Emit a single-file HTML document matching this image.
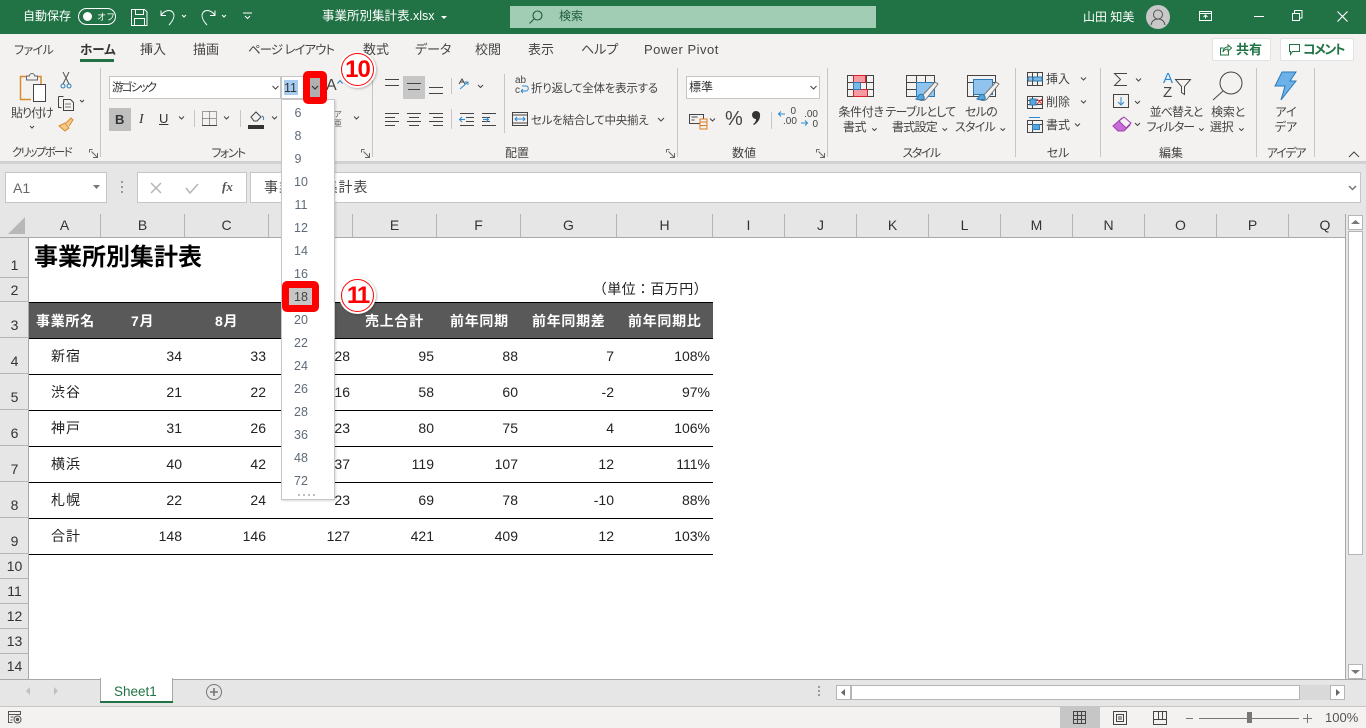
<!DOCTYPE html>
<html lang="ja"><head><meta charset="utf-8"><title>事業所別集計表.xlsx</title>
<style>
html,body{margin:0;padding:0}
body{width:1366px;height:728px;overflow:hidden;position:relative;background:#fff;font-family:"Liberation Sans","Noto Sans CJK JP",sans-serif;color:#444}
.t{position:absolute;white-space:nowrap;line-height:16px;font-size:12px}
.p{font-feature-settings:"palt"}
.tab{font-size:13px;top:42px}
.b{position:absolute;box-sizing:border-box}
svg{position:absolute;overflow:visible}
.w{color:#fff}
.c{text-align:center;transform:translateX(-50%)}
.col{position:absolute;top:214px;height:23px;line-height:23px;text-align:center;font-size:14px;color:#333;border-right:1px solid #b5b5b5;box-sizing:border-box}
.row{position:absolute;left:0;width:29px;box-sizing:border-box;border-bottom:1px solid #b5b5b5;text-align:center;font-size:14px;color:#333;display:flex;align-items:flex-end;justify-content:center;padding-bottom:3px;line-height:18px}
.d{position:absolute;font-size:14px;color:#222;line-height:18px;text-align:right;white-space:nowrap}
.h{position:absolute;top:312px;font-size:14px;font-weight:bold;color:#fff;line-height:18px;white-space:nowrap;letter-spacing:.7px}
.l{position:absolute;left:51px;font-size:14px;color:#222;line-height:18px;letter-spacing:1px}
.hl{position:absolute;left:29px;width:684px;height:1px;background:#000}
.m{position:absolute;left:294px;width:16px;text-align:center;font-size:12.5px;color:#5f6b78;line-height:16px}
.sep{position:absolute;top:68px;height:89px;width:1px;background:#c6c6c6}
</style></head><body>
<!-- title bar -->
<div class="b" style="left:0;top:0;width:1366px;height:34px;background:#217346"></div>
<div class="t w" style="left:23px;top:8px;font-size:12px">自動保存</div>
<div class="b" style="left:78px;top:8px;width:38px;height:17px;border:1px solid #fff;border-radius:9px"></div>
<div class="b" style="left:83px;top:12px;width:9px;height:9px;background:#fff;border-radius:50%"></div>
<div class="t w" style="left:97px;top:9px;font-size:9px">オフ</div>
<svg style="left:0;top:0" width="300" height="34" fill="none" stroke="#fff" stroke-width="1">
<path d="M131.500 9.500h13l2.500 2.500v13.500h-15.500zM135.500 9.500v5h8v-5M134.500 25.500v-7h10v7"/>
<path d="M161 10.500v5h5M161.500 15c2-4 8-6 11-3s1 8-3.500 13"/>
<path d="M182 15l2 2 2-2M222 15l2 2 2-2M245 16l2.500 2.500 2.500-2.500M243 13h9"/>
<path d="M215 10.500v5h-5M214.500 15c-2-4-8-6-11-3s-1 8 3.500 13"/>
</svg>
<div class="t w" style="left:322px;top:8px;font-size:12.500px">事業所別集計表.xlsx</div>
<svg style="left:440px;top:14px" width="8" height="6"><path d="M1 2h6l-3 3z" fill="#fff"/></svg>
<div class="b" style="left:510px;top:6px;width:366px;height:22px;background:#a0cdb3"></div>
<svg style="left:528px;top:9px" width="18" height="16" fill="none" stroke="#1f5c3c" stroke-width="1.100"><circle cx="9.500" cy="6.500" r="4.500"/><path d="M6 10l-4.500 4.500"/></svg>
<div class="t" style="left:559px;top:8px;color:#1f5c3c;font-size:12px">検索</div>
<div class="t w" style="left:1083px;top:9px;font-size:12px">山田 知美</div>
<div class="b" style="left:1146px;top:5px;width:24px;height:24px;background:#c8c8c8;border-radius:50%"></div>
<svg style="left:1146px;top:5px" width="24" height="24" fill="none" stroke="#555" stroke-width="1"><circle cx="12" cy="9.500" r="4.500"/><path d="M5 20c1-5 4-6 7-6s6 1 7 6"/></svg>
<svg style="left:1190px;top:0" width="176" height="34" fill="none" stroke="#fff" stroke-width="1">
<path d="M9.500 11.500h12v9h-12zM9.500 13.500h12M15.500 18.500v-3M13.500 17l2-2 2 2"/>
<path d="M64 16.500h10"/>
<path d="M102.500 13.500h7v7h-7zM104.500 13v-2.500h7.500v7.500h-2.500"/>
<path d="M147.500 11.500l10 10M157.500 11.500l-10 10" stroke-width="1.200"/>
</svg>
<!-- ribbon -->
<div class="b" style="left:0;top:34px;width:1366px;height:127px;background:#f3f2f1"></div>
<div class="b" style="left:0;top:161px;width:1366px;height:53px;background:#e6e6e6"></div>
<div class="b" style="left:0;top:161px;width:1366px;height:3px;background:#d2d2d2"></div>
<div class="t tab p" style="left:14px;font-size:12px;letter-spacing:-.6px">ファイル</div>
<div class="t tab p" style="left:80px;font-size:12.500px;font-weight:bold;color:#333">ホーム</div>
<div class="b" style="left:80px;top:59px;width:34px;height:3px;background:#217346"></div>
<div class="t tab" style="left:140px">挿入</div>
<div class="t tab" style="left:193px">描画</div>
<div class="t tab p" style="left:248px;font-size:12.500px;letter-spacing:-1px">ページ レイアウト</div>
<div class="t tab" style="left:363px">数式</div>
<div class="t tab p" style="left:415px">データ</div>
<div class="t tab" style="left:475px">校閲</div>
<div class="t tab" style="left:528px">表示</div>
<div class="t tab p" style="left:581px">ヘルプ</div>
<div class="t tab" style="left:644px;font-size:13px;letter-spacing:.5px">Power Pivot</div>
<div class="b" style="left:1212px;top:38px;width:59px;height:23px;background:#fff;border:1px solid #e2e2e2;border-radius:2px"></div>
<div class="b" style="left:1280px;top:38px;width:74px;height:23px;background:#fff;border:1px solid #e2e2e2;border-radius:2px"></div>
<svg style="left:1218px;top:43px" width="16" height="14" fill="none" stroke="#217346"><path d="M10.500 7.500v4.500h-8v-7h3M5 9c0-3 2-5 5-5V2l3.500 3L10 8V6c-2 0-4 1-5 3z"/></svg>
<div class="t" style="left:1236px;top:42px;font-weight:bold;color:#217346;font-size:13px">共有</div>
<svg style="left:1288px;top:43px" width="14" height="14" fill="none" stroke="#217346"><path d="M1.500 1.500h10v7h-7l-2 3v-3h-1z"/></svg>
<div class="t p" style="left:1303px;top:42px;font-weight:bold;color:#217346;font-size:13px;letter-spacing:-1.500px">コメント</div>
<!-- separators -->
<div class="sep" style="left:100px"></div><div class="sep" style="left:372px"></div><div class="sep" style="left:677px"></div><div class="sep" style="left:827px"></div><div class="sep" style="left:1015px"></div><div class="sep" style="left:1100px"></div><div class="sep" style="left:1256px"></div><div class="sep" style="left:1314px"></div>
<div class="b" style="left:504px;top:74px;width:1px;height:59px;background:#c6c6c6"></div>
<div class="b" style="left:451px;top:78px;width:1px;height:16px;background:#c6c6c6"></div>
<div class="b" style="left:451px;top:109px;width:1px;height:20px;background:#c6c6c6"></div>
<!-- clipboard -->
<svg style="left:0;top:60px" width="100" height="100" fill="none">
<path d="M31 39.500H20.500V16.500H41V24" stroke="#d98a2b" stroke-width="1.500"/><path d="M26.500 20v-4h3a2.500 2.500 0 0 1 5 0h3v4z" stroke="#666" fill="#f3f2f1"/>
<path d="M33.500 24.500h12v17h-12z" stroke="#444" fill="#fff"/>
<path d="M63 12l6 12M69 12l-6 12" stroke="#555"/><circle cx="63" cy="26" r="2" stroke="#2a7ab8"/><circle cx="69" cy="26" r="2" stroke="#2a7ab8"/>
<path d="M58.500 36.500h5M58.500 36.500v11h3M63.500 39.500h7l3 3v8h-10z" stroke="#444" fill="#f3f2f1"/><path d="M65 44h6M65 47h6" stroke="#777"/>
<path d="M80 40l2 2 2-2" stroke="#444"/><path d="M30 66l2 2 2-2" stroke="#444"/>
<path d="M59 66l6-3 4 5-4 3zM66 63l5-5 2 2-4 6" stroke="#d98a2b" fill="#f5c98a"/>
</svg>
<div class="t p" style="left:11px;top:105px;letter-spacing:-1px">貼り付け</div>
<div class="t p" style="left:12px;top:145px;font-size:11.500px;letter-spacing:-1.700px">クリップボード</div>
<svg style="left:89px;top:149px" width="10" height="10" fill="none" stroke="#666"><path d="M.500.500h3M.500.500v3M8.500 8.500L2.500 2.500M8.500 4v4.500H4"/></svg>
<!-- font group -->
<div class="b" style="left:109px;top:76px;width:172px;height:23px;background:#fff;border:1px solid #c6c6c6"></div>
<div class="t p" style="left:112px;top:80px;font-size:11.500px;color:#333;letter-spacing:-1.800px">游ゴシック</div>
<svg style="left:272px;top:85px" width="8" height="6" fill="none" stroke="#444"><path d="M.500 1l3 3 3-3"/></svg>
<div class="b" style="left:281px;top:76px;width:45px;height:23px;background:#fff;border:1px solid #c6c6c6"></div>
<div class="b" style="left:284px;top:80px;width:14px;height:15px;background:#a6cdf0"></div>
<div class="t" style="left:284px;top:80px;color:#333;font-size:12.500px">11</div>
<div class="t" style="left:326px;top:78px;font-size:16px;color:#444">A</div>
<svg style="left:337px;top:80px" width="6" height="5" fill="none" stroke="#2a7ab8"><path d="M.500 3.500l2.500-3 2.500 3"/></svg>
<div class="b" style="left:109px;top:108px;width:22px;height:23px;background:#bfbfbf"></div>
<div class="t" style="left:115px;top:112px;font-weight:bold;font-size:13px;color:#333">B</div>
<div class="t" style="left:139px;top:112px;font-style:italic;font-family:'Liberation Serif',serif;font-size:14px;color:#333">I</div>
<div class="t" style="left:159px;top:111px;font-size:13px;color:#333;text-decoration:underline">U</div>
<svg style="left:100px;top:108px" width="280" height="26" fill="none" stroke="#444">
<path d="M79 8.500l2.500 2.500 2.500-2.500M124 8.500l2.500 2.500 2.500-2.500M172 8.500l2.500 2.500 2.500-2.500M254 8.500l2.500 2.500 2.500-2.500"/>
<path d="M102.500 3.500h14v14h-14zM109.500 3.500v14M102.500 10.500h14" stroke-dasharray="1 1"/><path d="M102 17.500h15"/>
<path d="M94.500 2v17M140.500 2v17" stroke="#c6c6c6"/>
<path d="M151 9l5-5 5 5-4 4h-3z"/><path d="M162 8c2 1 2 3 1 4" stroke="#2a7ab8"/>
</svg>
<div class="b" style="left:248px;top:125px;width:16px;height:4px;background:#333"></div>
<div class="t" style="left:334px;top:110px;font-size:8px;line-height:9px;color:#666">ア<br>亜</div>
<div class="t c p" style="left:228px;top:145px;letter-spacing:-1.500px">フォント</div>
<svg style="left:361px;top:149px" width="10" height="10" fill="none" stroke="#666"><path d="M.500.500h3M.500.500v3M8.500 8.500L2.500 2.500M8.500 4v4.500H4"/></svg>
<!-- alignment -->
<div class="b" style="left:403px;top:76px;width:22px;height:23px;background:#c6c6c6"></div>
<svg style="left:380px;top:74px" width="125" height="60" fill="none" stroke="#444">
<path d="M5 5.500h14M5 11.500h14M27 9.500h14M28 15.500h12M49 13.500h14M49 19.500h14"/>
<path d="M5 39.500h14M5 43.500h10M5 47.500h14M5 51.500h10M27 39.500h14M29 43.500h10M27 47.500h14M29 51.500h10M49 39.500h14M53 43.500h10M49 47.500h14M53 51.500h10"/>
<path d="M80 15l8-7M85 8h3v3" stroke="#2a8ad4"/><path d="M79 10l3-5 3 5M80 8h4" stroke="#444"/><path d="M98 11l2.500 2.500 2.500-2.500"/>
<path d="M80 39.500h14M86 43.500h8M86 47.500h8M80 51.500h14M102 39.500h14M102 43.500h8M102 47.500h8M102 51.500h14"/>
<path d="M85 45.500h-5M82 43l-2.500 2.500L82 48M103 45.500h5M106 43l2.500 2.500L106 48" stroke="#2a8ad4"/>
</svg>
<div class="t" style="left:515px;top:76px;font-size:10px;line-height:10px;color:#444">ab<br>c</div>
<svg style="left:512px;top:76px" width="18" height="60" fill="none"><path d="M9 15h5c3 0 3-5 0-5h-4M9 15l2-2M9 15l2 2" stroke="#2a8ad4"/><path d="M.500 36.500h15v13H.500zM.500 39h15M.500 47h15" stroke="#444"/><path d="M3 43h10M5 41l-2 2 2 2M11 41l2 2-2 2" stroke="#2a8ad4"/></svg>
<div class="t p" style="left:531px;top:81px;font-size:11.500px;letter-spacing:-.25px">折り返して全体を表示する</div>
<div class="t p" style="left:531px;top:113px;font-size:11.500px;letter-spacing:-.25px">セルを結合して中央揃え</div>
<svg style="left:657px;top:117px" width="9" height="6" fill="none" stroke="#444"><path d="M1 1l3 3 3-3"/></svg>
<div class="t c" style="left:517px;top:145px">配置</div>
<svg style="left:666px;top:149px" width="10" height="10" fill="none" stroke="#666"><path d="M.500.500h3M.500.500v3M8.500 8.500L2.500 2.500M8.500 4v4.500H4"/></svg>
<!-- number -->
<div class="b" style="left:686px;top:76px;width:134px;height:23px;background:#fff;border:1px solid #c6c6c6"></div>
<div class="t" style="left:689px;top:79px;font-size:12px;color:#333">標準</div>
<svg style="left:810px;top:85px" width="8" height="6" fill="none" stroke="#444"><path d="M.500 1l3 3 3-3"/></svg>
<svg style="left:688px;top:110px" width="132" height="22" fill="none" stroke="#444">
<path d="M1.500 4.500h14v9h-14zM3.500 7h6M3.500 10h3"/><path d="M12 9h7v10h-7zM12 12h7M12 15.500h7" stroke="#e07b1c" fill="#f3f2f1"/>
<path d="M22 8.500l2.500 2.500L27 8.500"/><path d="M83.500 2v17" stroke="#c6c6c6"/>
<path d="M97 4h-6M93 1.500L90.500 4 93 6.500M113 13h6M117 10.500l2.500 2.500-2.500 2.500" stroke="#2a8ad4"/>
</svg>
<div class="t" style="left:725px;top:108px;font-size:20px;line-height:22px;color:#444">%</div>
<svg style="left:750px;top:110px" width="12" height="17"><path d="M6 1a4 4 0 0 1 4 5c0 4-3 7-6 9l-1-1c2-1 3-3 3-5a4 4 0 0 1 0-8z" fill="#333"/></svg>
<div class="t" style="left:783px;top:107px;font-size:10px;line-height:10px;color:#444;text-align:right;width:13px">0<br>.00</div>
<div class="t" style="left:802px;top:110px;font-size:10px;line-height:10px;color:#444;text-align:right;width:16px">.00<br>0</div>
<div class="t c" style="left:744px;top:145px">数値</div>
<svg style="left:816px;top:149px" width="10" height="10" fill="none" stroke="#666"><path d="M.500.500h3M.500.500v3M8.500 8.500L2.500 2.500M8.500 4v4.500H4"/></svg>
<!-- styles -->
<svg style="left:845px;top:72px" width="165" height="28" fill="none" stroke="#444">
<path d="M2.500 3.500h26v21h-26zM2.500 10.500h26M2.500 17.500h26M8.500 3.500v21M15.500 3.500v21M21.500 3.500v21"/>
<path d="M8.500 3.500h12v7h-12zM8.500 17.500h14v7h-14z" fill="#f59aa0" stroke="#d8222a"/><path d="M8.500 10.500h7v7h-7z" fill="#7ab8e8" stroke="#2a7ab8"/>
<path d="M61.500 3.500h28v21h-28zM61.500 10.500h28M61.500 17.500h28M71.500 3.500v21M80.500 3.500v21"/><path d="M71.500 10.500h18v14h-18z" fill="#90c4ee" stroke="#2a7ab8"/>
<path d="M76 25l14-15 3 2-12 15c-2 2-6 2-7 0z" fill="#f3f2f1" stroke="#777"/><path d="M74 23c3-2 6 1 5 4-2 1-6 1-8 0 2-1 2-3 3-4z" fill="#58a5dc" stroke="#2a7ab8"/>
<path d="M122.500 3.500h28v21h-28zM122.500 10.500h28M128.500 10.500v14"/><path d="M128.500 7.500h19v15h-19z" fill="#90c4ee" stroke="#2a7ab8"/>
<path d="M137 25l14-15 3 2-12 15c-2 2-6 2-7 0z" fill="#f3f2f1" stroke="#777"/><path d="M135 23c3-2 6 1 5 4-2 1-6 1-8 0 2-1 2-3 3-4z" fill="#58a5dc" stroke="#2a7ab8"/>
</svg>
<div class="t c p" style="left:861px;top:105px;line-height:15px;text-align:center;letter-spacing:-.3px">条件付き<br>書式 ⌄</div>
<div class="t c p" style="left:920.500px;top:105px;line-height:15px;text-align:center;letter-spacing:-.7px">テーブルとして<br>書式設定 ⌄</div>
<div class="t c p" style="left:981px;top:105px;line-height:15px;text-align:center;letter-spacing:-.7px">セルの<br>スタイル ⌄</div>
<div class="t c p" style="left:921px;top:145px;letter-spacing:-1.500px">スタイル</div>
<!-- cells -->
<svg style="left:1026px;top:70px" width="22" height="64" fill="none" stroke="#444">
<path d="M1.500 2.500h15v13h-15zM1.500 7h15M1.500 11h15M6.500 2.500v13M11.500 2.500v13"/><path d="M7 7h9v4H7z" fill="#7ab8e8" stroke="#2a7ab8"/><path d="M8 9H2M4 6.500L1.500 9 4 11.500" stroke="#2a8ad4"/>
<path d="M1.500 26.500h15v12h-15zM1.500 30.500h15M1.500 34.500h15M6.500 26.500v12"/><path d="M4 29h6v6H4z" fill="#58a5dc" stroke="#2a7ab8"/><path d="M11 29l5 5M16 29l-5 5" stroke="#e53333"/>
<path d="M1.500 50.500h15v12h-15zM6.500 50.500v12M1.500 54.500h15"/><path d="M6.500 54.500h7v5h-7z" fill="#58a5dc" stroke="#2a7ab8"/><path d="M3 47.500h11" stroke="#2a8ad4"/>
</svg>
<div class="t" style="left:1046px;top:71px">挿入</div><div class="t" style="left:1046px;top:94px">削除</div><div class="t" style="left:1046px;top:117px">書式</div>
<svg style="left:1072px;top:74px" width="20" height="60" fill="none" stroke="#444"><path d="M9 3.500l2.500 2.500L14 3.500M9 26.500l2.500 2.500 2.500-2.500M3 49.500l2.500 2.500L8 49.500"/></svg>
<div class="t c p" style="left:1058px;top:145px">セル</div>
<!-- editing -->
<svg style="left:1110px;top:68px" width="150" height="68" fill="none" stroke="#444">
<path d="M17 5.500H4.500l6 6-6 6H17"/><path d="M26 10.500l2.500 2.500 2.500-2.500M25 33l2.500 2.500L30 33M25 55l2.500 2.500L30 55"/>
<path d="M3.500 26.500h15v13h-15z"/><path d="M11 29v8M8 34l3 3 3-3" stroke="#2a8ad4"/>
<path d="M3 58l9-8 8 7-6 6H8z" fill="#c86dd7" stroke="#a040b0"/><path d="M9 53l7 7 5-5-7-6z" fill="#f3f2f1" stroke="#a040b0"/>
<path d="M65.500 11.500h15l-6 7v8l-3-2v-6z"/>
<circle cx="121" cy="15" r="11"/><path d="M113 23l-10 9"/>
</svg>
<div class="t" style="left:1163px;top:71px;font-size:15px;color:#2a8ad4">A</div>
<div class="t" style="left:1163px;top:85px;font-size:15px;color:#444">Z</div>
<div class="t c p" style="left:1176px;top:105px;line-height:15px;text-align:center;letter-spacing:-1px">並べ替えと<br>フィルター ⌄</div>
<div class="t c p" style="left:1228px;top:105px;line-height:15px;text-align:center;letter-spacing:-.3px">検索と<br>選択 ⌄</div>
<div class="t c" style="left:1171px;top:145px">編集</div>
<!-- ideas -->
<svg style="left:1274px;top:71px" width="24" height="30"><path d="M8 1h14l-6 9h6L7 29l4-14H1z" fill="#6cb1e8" stroke="#2a7ab8"/></svg>
<div class="t c p" style="left:1286px;top:105px;line-height:15px;text-align:center">アイ<br>デア</div>
<div class="t c p" style="left:1286px;top:145px;letter-spacing:-1.300px">アイデア</div>
<svg style="left:1348px;top:151px" width="12" height="8" fill="none" stroke="#444"><path d="M1 6l5-5 5 5"/></svg>
<!-- formula bar -->
<div class="b" style="left:5px;top:172px;width:102px;height:31px;background:#fff;border:1px solid #c6c6c6"></div>
<div class="t" style="left:13px;top:180px;font-size:14px;color:#666">A1</div>
<svg style="left:92px;top:185px" width="10" height="6"><path d="M1 0h7L4.500 4z" fill="#777"/></svg>
<svg style="left:121px;top:181px" width="3" height="14"><path d="M0 0h2v2H0zM0 5h2v2H0zM0 10h2v2H0z" fill="#999"/></svg>
<div class="b" style="left:137px;top:172px;width:110px;height:31px;background:#fff;border:1px solid #c6c6c6"></div>
<svg style="left:150px;top:182px" width="85" height="14" fill="none" stroke="#b5b5b5" stroke-width="1.500"><path d="M1 1l10 10M11 1L1 11M36 6l4 5 8-9"/></svg>
<div class="t" style="left:222px;top:179px;font-family:'Liberation Serif',serif;font-style:italic;font-weight:bold;font-size:13px;color:#555">fx</div>
<div class="b" style="left:250px;top:172px;width:1111px;height:31px;background:#fff;border:1px solid #c6c6c6"></div>
<div class="t" style="left:264px;top:179px;font-size:14px;color:#444;letter-spacing:.9px">事業所別集計表</div>
<svg style="left:1348px;top:185px" width="10" height="7" fill="none" stroke="#777" stroke-width="1.500"><path d="M1 1l3.500 3.500L8 1"/></svg>
<!-- headers -->
<div class="b" style="left:0;top:214px;width:1366px;height:24px;background:#e6e6e6"></div>
<div class="b" style="left:0;top:237px;width:1345px;height:1px;background:#a8a8a8"></div>
<svg style="left:8px;top:217px" width="18" height="18"><path d="M17 0v17H0z" fill="#b8b8b8"/></svg>
<div class="col" style="left:29px;width:72px">A</div><div class="col" style="left:101px;width:84px">B</div><div class="col" style="left:185px;width:84px">C</div><div class="col" style="left:269px;width:84px">D</div><div class="col" style="left:353px;width:84px">E</div><div class="col" style="left:437px;width:84px">F</div><div class="col" style="left:521px;width:96px">G</div><div class="col" style="left:617px;width:96px">H</div><div class="col" style="left:713px;width:72px">I</div><div class="col" style="left:785px;width:72px">J</div><div class="col" style="left:857px;width:72px">K</div><div class="col" style="left:929px;width:72px">L</div><div class="col" style="left:1001px;width:72px">M</div><div class="col" style="left:1073px;width:72px">N</div><div class="col" style="left:1145px;width:72px">O</div><div class="col" style="left:1217px;width:72px">P</div><div class="col" style="left:1289px;width:56px;border-right:0;padding-left:16px">Q</div>
<div class="b" style="left:0;top:238px;width:29px;height:441px;background:#e6e6e6;border-right:1px solid #a8a8a8"></div>
<div class="row" style="top:238px;height:40px">1</div><div class="row" style="top:278px;height:24px;padding-bottom:2px">2</div><div class="row" style="top:302px;height:36px">3</div><div class="row" style="top:338px;height:36px">4</div><div class="row" style="top:374px;height:36px">5</div><div class="row" style="top:410px;height:36px">6</div><div class="row" style="top:446px;height:36px">7</div><div class="row" style="top:482px;height:36px">8</div><div class="row" style="top:518px;height:36px">9</div><div class="row" style="top:554px;height:25px">10</div><div class="row" style="top:579px;height:25px">11</div><div class="row" style="top:604px;height:25px">12</div><div class="row" style="top:629px;height:25px">13</div><div class="row" style="top:654px;height:25px;border-bottom:0;padding-bottom:4px">14</div>
<!-- sheet -->
<div class="t" style="left:34px;top:244px;font-size:24px;line-height:28px;font-weight:bold;color:#000">事業所別集計表</div>
<div class="d" style="left:560px;top:280px;width:148px;font-size:14px;letter-spacing:.4px">（単位：百万円）</div>
<div class="b" style="left:29px;top:302px;width:684px;height:36px;background:#595959"></div>
<div class="hl" style="top:302px"></div>
<div class="h" style="left:36px">事業所名</div><div class="h" style="left:131px">7月</div><div class="h" style="left:215px">8月</div><div class="h" style="left:365px">売上合計</div><div class="h" style="left:450px">前年同期</div><div class="h" style="left:532px">前年同期差</div><div class="h" style="left:628px">前年同期比</div>
<div class="hl" style="top:338px"></div><div class="hl" style="top:374px"></div><div class="hl" style="top:410px"></div><div class="hl" style="top:446px"></div><div class="hl" style="top:482px"></div><div class="hl" style="top:518px"></div><div class="hl" style="top:554px"></div>
<div class="l" style="top:347px">新宿</div><div class="l" style="top:383px">渋谷</div><div class="l" style="top:419px">神戸</div><div class="l" style="top:455px">横浜</div><div class="l" style="top:491px">札幌</div><div class="l" style="top:527px">合計</div>
<div class="d" style="right:1184px;top:347px">34</div><div class="d" style="right:1100px;top:347px">33</div><div class="d" style="right:1016px;top:347px">28</div><div class="d" style="right:932px;top:347px">95</div><div class="d" style="right:848px;top:347px">88</div><div class="d" style="right:752px;top:347px">7</div><div class="d" style="right:656px;top:347px">108%</div>
<div class="d" style="right:1184px;top:383px">21</div><div class="d" style="right:1100px;top:383px">22</div><div class="d" style="right:1016px;top:383px">16</div><div class="d" style="right:932px;top:383px">58</div><div class="d" style="right:848px;top:383px">60</div><div class="d" style="right:752px;top:383px">-2</div><div class="d" style="right:656px;top:383px">97%</div>
<div class="d" style="right:1184px;top:419px">31</div><div class="d" style="right:1100px;top:419px">26</div><div class="d" style="right:1016px;top:419px">23</div><div class="d" style="right:932px;top:419px">80</div><div class="d" style="right:848px;top:419px">75</div><div class="d" style="right:752px;top:419px">4</div><div class="d" style="right:656px;top:419px">106%</div>
<div class="d" style="right:1184px;top:455px">40</div><div class="d" style="right:1100px;top:455px">42</div><div class="d" style="right:1016px;top:455px">37</div><div class="d" style="right:932px;top:455px">119</div><div class="d" style="right:848px;top:455px">107</div><div class="d" style="right:752px;top:455px">12</div><div class="d" style="right:656px;top:455px">111%</div>
<div class="d" style="right:1184px;top:491px">22</div><div class="d" style="right:1100px;top:491px">24</div><div class="d" style="right:1016px;top:491px">23</div><div class="d" style="right:932px;top:491px">69</div><div class="d" style="right:848px;top:491px">78</div><div class="d" style="right:752px;top:491px">-10</div><div class="d" style="right:656px;top:491px">88%</div>
<div class="d" style="right:1184px;top:527px">148</div><div class="d" style="right:1100px;top:527px">146</div><div class="d" style="right:1016px;top:527px">127</div><div class="d" style="right:932px;top:527px">421</div><div class="d" style="right:848px;top:527px">409</div><div class="d" style="right:752px;top:527px">12</div><div class="d" style="right:656px;top:527px">103%</div>
<!-- scrollbars -->
<div class="b" style="left:1345px;top:214px;width:21px;height:465px;background:#e6e6e6;border-left:1px solid #a8a8a8"></div>
<div class="b" style="left:1348px;top:215px;width:15px;height:15px;background:#fff;border:1px solid #b5b5b5"></div>
<svg style="left:1351px;top:220px" width="9" height="5"><path d="M4.500 0L9 4H0z" fill="#777"/></svg>
<div class="b" style="left:1348px;top:231px;width:15px;height:324px;background:#fff;border:1px solid #b5b5b5"></div>
<div class="b" style="left:1348px;top:664px;width:15px;height:15px;background:#fff;border:1px solid #b5b5b5"></div>
<svg style="left:1351px;top:670px" width="9" height="5"><path d="M4.500 4L9 0H0z" fill="#777"/></svg>
<!-- tab bar -->
<div class="b" style="left:0;top:679px;width:1366px;height:27px;background:#e6e6e6;border-top:1px solid #a8a8a8"></div>
<div class="b" style="left:100px;top:678px;width:73px;height:25px;background:#fff;border:1px solid #a8a8a8;border-top:0;border-bottom:0"></div>
<div class="b" style="left:100px;top:701px;width:73px;height:2px;background:#217346"></div>
<div class="t" style="left:114px;top:684px;font-size:13.500px;color:#217346">Sheet1</div>
<svg style="left:26px;top:687px" width="36" height="10"><path d="M4 0v8L0 4zM28 0v8l4-4z" fill="#c0c0c0"/></svg>
<svg style="left:206px;top:684px" width="16" height="16" fill="none" stroke="#777"><circle cx="8" cy="8" r="7.500"/><path d="M4 8h8M8 4v8" stroke-width="1.600"/></svg>
<svg style="left:818px;top:686px" width="3" height="12"><path d="M0 0h2v2H0zM0 4h2v2H0zM0 8h2v2H0z" fill="#999"/></svg>
<div class="b" style="left:836px;top:685px;width:15px;height:15px;background:#fff;border:1px solid #b5b5b5"></div>
<svg style="left:841px;top:689px" width="5" height="8"><path d="M4 0v7L0 3.500z" fill="#666"/></svg>
<div class="b" style="left:851px;top:685px;width:449px;height:15px;background:#fff;border:1px solid #b5b5b5"></div>
<div class="b" style="left:1300px;top:685px;width:30px;height:15px;background:#d9d9d9"></div>
<div class="b" style="left:1330px;top:685px;width:15px;height:15px;background:#fff;border:1px solid #b5b5b5"></div>
<svg style="left:1336px;top:689px" width="5" height="8"><path d="M0 0v7l4-3.500z" fill="#666"/></svg>
<!-- status bar -->
<div class="b" style="left:0;top:706px;width:1366px;height:22px;background:#f3f2f1;border-top:1px solid #c6c6c6"></div>
<svg style="left:7px;top:710px" width="16" height="15" fill="none" stroke="#555"><path d="M1.500 1.500h12v3h-12zM1.500 4.500v8h4M3.500 7h3M3.500 10h2"/><circle cx="10.500" cy="9.500" r="3.500"/><circle cx="10.500" cy="9.500" r="1.200" fill="#555"/></svg>
<div class="b" style="left:1060px;top:707px;width:40px;height:21px;background:#c6c6c6"></div>
<svg style="left:1070px;top:709px" width="250" height="18" fill="none" stroke="#444">
<path d="M3.500 2.500h12v12h-12zM7.500 2.500v12M11.500 2.500v12M3.500 6.500h12M3.500 10.500h12"/>
<path d="M43.500 2.500h13v13h-13zM46.500 5.500h7v7h-7zM48 8h4M48 10h4"/>
<path d="M83.500 2.500h13v13h-13zM83.500 10.500h13M88.500 2.500v8M92.500 2.500v8"/>
<path d="M116 9.500h7M129 9.500h100M233 9.500h9M237.500 5v9" stroke="#777"/>
</svg>
<div class="b" style="left:1247px;top:712px;width:5px;height:11px;background:#777"></div>
<div class="t" style="left:1325px;top:710px;font-size:13px;color:#555">100%</div>
<!-- dropdown -->
<div class="b" style="left:281px;top:99px;width:54px;height:401px;background:#fff;border:1px solid #c6c6c6;box-shadow:1px 1px 2px rgba(0,0,0,.15)"></div>
<div class="m" style="left:290px;top:105px">6</div><div class="m" style="left:290px;top:128px">8</div><div class="m" style="left:290px;top:151px">9</div><div class="m" style="left:293px;top:174px">10</div><div class="m" style="left:293px;top:197px">11</div><div class="m" style="left:293px;top:220px">12</div><div class="m" style="left:293px;top:243px">14</div><div class="m" style="left:293px;top:266px">16</div>
<div class="m" style="left:293px;top:312px">20</div><div class="m" style="left:293px;top:335px">22</div><div class="m" style="left:293px;top:358px">24</div><div class="m" style="left:293px;top:381px">26</div><div class="m" style="left:293px;top:404px">28</div><div class="m" style="left:293px;top:427px">36</div><div class="m" style="left:293px;top:450px">48</div><div class="m" style="left:293px;top:473px">72</div>
<svg style="left:298px;top:494px" width="18" height="2"><path d="M0 0h2v2H0zM5 0h2v2H5zM10 0h2v2h-2zM15 0h2v2h-2z" fill="#c0c0c0"/></svg>
<!-- red highlight 18 -->
<div class="b" style="left:285px;top:284px;width:31px;height:24px;background:#c6c6c6"></div>
<div class="b" style="left:282px;top:281px;width:37px;height:31px;border:7px solid #ff0000;border-radius:5px"></div>
<div class="m" style="left:293px;top:289px;color:#444">18</div>
<!-- red highlight dropdown arrow -->
<div class="b" style="left:310px;top:77px;width:10px;height:20px;background:#b0b0b0"></div>
<div class="b" style="left:303px;top:71px;width:24px;height:33px;border:7px solid #ff0000;border-radius:5px"></div>
<svg style="left:311px;top:85px" width="8" height="6" fill="none" stroke="#333" stroke-width="1.200"><path d="M1 1l3 3 3-3"/></svg>
<!-- callouts -->
<div class="b" style="left:339px;top:51px;width:37px;height:37px;background:#fff;border-radius:50%;box-shadow:1px 1px 2px rgba(0,0,0,.25)"></div>
<div class="b" style="left:341px;top:53px;width:33px;height:33px;border:1.500px solid #f00;border-radius:50%"></div>
<div class="t c" style="left:357.500px;top:55px;font-size:24px;line-height:29px;font-weight:bold;color:#f00;letter-spacing:-1px">10</div>
<div class="b" style="left:339px;top:277px;width:37px;height:37px;background:#fff;border-radius:50%;box-shadow:1px 1px 2px rgba(0,0,0,.25)"></div>
<div class="b" style="left:341px;top:279px;width:33px;height:33px;border:1.500px solid #f00;border-radius:50%"></div>
<div class="t c" style="left:357.500px;top:281px;font-size:24px;line-height:29px;font-weight:bold;color:#f00;letter-spacing:-2px">11</div>
</body></html>
